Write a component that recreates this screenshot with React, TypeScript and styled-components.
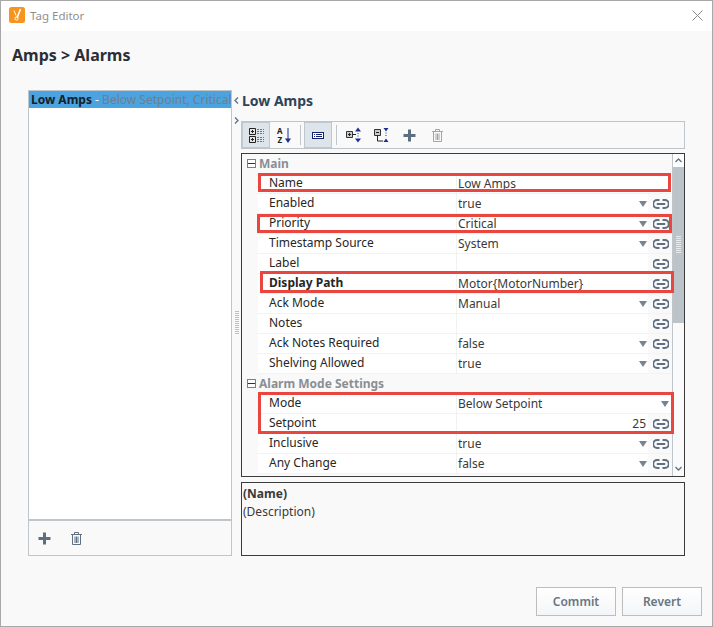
import React from "react";
import styled, { createGlobalStyle } from "styled-components";

const GlobalStyle = createGlobalStyle`
html, body {
  margin: 0;
  padding: 0;
  background: #f9f9f9;
}
`

type Row = {
    label: string,
    value?: string,
    bold?: boolean,
    dropdown?: boolean,
    link?: boolean,
    right?: boolean,
}

const mainRows: Row[] = [
    { label: "Name", value: "Low Amps" },
    { label: "Enabled", value: "true", dropdown: true, link: true },
    { label: "Priority", value: "Critical", dropdown: true, link: true },
    { label: "Timestamp Source", value: "System", dropdown: true, link: true },
    { label: "Label", link: true },
    { label: "Display Path", value: "Motor{MotorNumber}", bold: true, link: true },
    { label: "Ack Mode", value: "Manual", dropdown: true, link: true },
    { label: "Notes", link: true },
    { label: "Ack Notes Required", value: "false", dropdown: true, link: true },
    { label: "Shelving Allowed", value: "true", dropdown: true, link: true },
]

const modeRows: Row[] = [
    { label: "Mode", value: "Below Setpoint", dropdown: true },
    { label: "Setpoint", value: "25", right: true, link: true },
    { label: "Inclusive", value: "true", dropdown: true, link: true },
    { label: "Any Change", value: "false", dropdown: true, link: true },
]

const LinkIcon = () => (
    <svg width="16" height="10" viewBox="0 0 16 10">
        <path d="M6.5 1H4.2a4 4 0 0 0 0 8H6.5M9.5 1h2.3a4 4 0 0 1 0 8H9.5M3.8 5h8.4" fill="none" stroke="#5f7082" strokeWidth="2" />
    </svg>
)

const PlusIcon = () => (
    <svg width="13" height="13" viewBox="0 0 13 13">
        <path d="M6.5 0.5v12M0.5 6.5h12" stroke="#5c6f82" strokeWidth="3" />
    </svg>
)

const TrashIcon = ({ color }: { color: string }) => (
    <svg width="11" height="13" viewBox="0 0 11 13">
        <path d="M0 2.5h11M3.5 2V0.5h4V2M1.5 3v9.5h8V3M4 4.5v6.5M5.5 4.5v6.5M7 4.5v6.5" fill="none" stroke={color} strokeWidth="1" />
    </svg>
)

const CategorizedIcon = () => (
    <svg width="15" height="16" viewBox="0 0 15 16">
        <path d="M0.5 1.5h6v6h-6zM0.5 9.5h6v6h-6z" fill="#e4e4e4" stroke="#222" />
        <path d="M2 4.5h3M3.5 3v3M2 12.5h3M3.5 11v3" stroke="#222" />
        <path d="M8 2.5h7M8 4.5h7M8 6.5h7M8 10.5h7M8 12.5h7M8 14.5h7" stroke="#777" strokeDasharray="2 1" />
    </svg>
)

const SortIcon = () => (
    <svg width="14" height="17" viewBox="0 0 14 17" overflow="visible">
        <path d="M11 1v12" stroke="#1f2f8f" strokeWidth="1" />
        <path d="M8 11.5h6L11 16z" fill="#1f2f8f" />
        <text x="0" y="7" fontFamily="'Noto Sans', sans-serif" fontSize="8" fontWeight="700" fill="#222">A</text>
        <text x="0.5" y="15.5" fontFamily="'Noto Sans', sans-serif" fontSize="8" fontWeight="700" fill="#222">Z</text>
    </svg>
)

const DescIcon = () => (
    <svg width="12" height="7" viewBox="0 0 12 7">
        <rect x="0.5" y="0.5" width="11" height="6" fill="#fff" stroke="#14206e" />
        <path d="M2 2.5h1M4 2.5h6M2 4.5h1M4 4.5h6" stroke="#14206e" />
    </svg>
)

const ExpandIcon = () => (
    <svg width="16" height="16" viewBox="0 0 16 16">
        <path d="M0.5 4.5h6v6h-6z" fill="#ccc" stroke="#333" />
        <path d="M2 7.5h3M3.5 6v3M7 7.5h3" stroke="#222" />
        <path d="M12 0.5L15 4.5H9zM12 15.5L15 11.5H9z" fill="#1f2f8f" />
        <path d="M12 6v1M12 8.5v1" stroke="#1f2f8f" />
    </svg>
)

const CollapseIcon = () => (
    <svg width="16" height="16" viewBox="0 0 16 16">
        <path d="M0.5 2.5h6v6h-6z" fill="#ccc" stroke="#333" />
        <path d="M2 5.5h3M3.5 8.5v5.5H9" fill="none" stroke="#222" />
        <path d="M9.5 1h5L12 4.5zM9.5 15h5L12 11.5z" fill="#1f2f8f" />
        <path d="M12 5.5v1M12 8v1" stroke="#1f2f8f" />
    </svg>
)

const LogoIcon = () => (
    <svg width="16" height="16" viewBox="0 0 16 16">
        <rect width="16" height="16" rx="2.5" fill="#f7941d" />
        <path d="M5 3.5L7 8.5" stroke="#fff" strokeWidth="1" />
        <path d="M11.5 2L8 11" stroke="#fff" strokeWidth="1.6" />
        <circle cx="7.5" cy="11.5" r="1.6" fill="none" stroke="#fff" />
    </svg>
)

const CloseIcon = () => (
    <svg width="11" height="11" viewBox="0 0 11 11">
        <path d="M0.5 0.5l10 10M10.5 0.5l-10 10" stroke="#8a8a8a" />
    </svg>
)

const MinusBox = () => (
    <TreeBox>
        <svg width="9" height="9" viewBox="0 0 9 9">
            <path d="M1 4.5h7" stroke="#333" />
        </svg>
    </TreeBox>
)

const ChevronSmall = ({ d }: { d: string }) => (
    <svg width="7" height="7" viewBox="0 0 7 7">
        <path d={d} fill="none" stroke="#5f7082" strokeWidth="1.3" />
    </svg>
)

const PropRow = ({ row }: { row: Row }) => (
    <RowLine>
        <RowLabel $bold={row.bold}>{row.label}</RowLabel>
        <RowValue $right={row.right}>
            {row.value}
            {row.dropdown && <DropArrow $inset={row.link ? 1 : 3} />}
        </RowValue>
        {row.link && <LinkCell><LinkIcon /></LinkCell>}
    </RowLine>
)

export default function App() {
    return (
        <Window>
            <GlobalStyle />
            <TitleBar>
                <LogoIcon />
                <TitleText>Tag Editor</TitleText>
                <CloseSpot><CloseIcon /></CloseSpot>
            </TitleBar>

            <Crumb>Amps &gt; Alarms</Crumb>

            <ListPanel>
                <ListRow>
                    <strong>Low Amps</strong><Dash> - </Dash><Faded>Below Setpoint, Critical</Faded>
                </ListRow>
            </ListPanel>
            <ListFooter>
                <FooterPlus><PlusIcon /></FooterPlus>
                <FooterTrash><TrashIcon color="#5f7082" /></FooterTrash>
            </ListFooter>

            <SplitLeft><ChevronSmall d="M5 0.5L2 3.5L5 6.5" /></SplitLeft>
            <SplitRight><ChevronSmall d="M2 0.5L5 3.5L2 6.5" /></SplitRight>
            <Grip />

            <AlarmTitle>Low Amps</AlarmTitle>

            <Toolbar>
                <ToolButton $active $left={0}><CategorizedIcon /></ToolButton>
                <ToolButton $left={28}><SortIcon /></ToolButton>
                <ToolDivider $left={58} />
                <ToolButton $active $left={62}><DescIcon /></ToolButton>
                <ToolDivider $left={94} />
                <ToolButton $left={98}><ExpandIcon /></ToolButton>
                <ToolButton $left={126}><CollapseIcon /></ToolButton>
                <ToolButton $left={153}><PlusIcon /></ToolButton>
                <ToolButton $left={181}><TrashIcon color="#a0a6ac" /></ToolButton>
            </Toolbar>

            <GridBox>
                <GroupRow><MinusBox />Main</GroupRow>
                {mainRows.map(row => <PropRow key={row.label} row={row} />)}
                <GroupRow><MinusBox />Alarm Mode Settings</GroupRow>
                {modeRows.map(row => <PropRow key={row.label} row={row} />)}
                <ScrollTrack>
                    <ScrollUp><ChevronSmall d="M0.5 5L3.5 2L6.5 5" /></ScrollUp>
                    <ScrollThumb />
                    <ScrollDown><ChevronSmall d="M0.5 2L3.5 5L6.5 2" /></ScrollDown>
                </ScrollTrack>
            </GridBox>

            <Mark $left={258} $top={173} $width={413} $height={19} />
            <Mark $left={257} $top={214} $width={415} $height={19} />
            <Mark $left={260} $top={271} $width={414} $height={22} />
            <Mark $left={258} $top={392} $width={416} $height={42} />

            <DescBox>
                <DescName>(Name)</DescName>
                <div>(Description)</div>
            </DescBox>

            <FootButton $left={536}>Commit</FootButton>
            <FootButton $left={622}>Revert</FootButton>
        </Window>
    )
}

const Window = styled.div`
position: relative;
width: 713px;
height: 627px;
box-sizing: border-box;
border: 1px solid #a8a8a8;
background: #f9f9f9;
overflow: hidden;
font-family: "Noto Sans", sans-serif;
font-size: 12px;
color: #2b2b2b;
`

const TitleBar = styled.div`
position: absolute;
left: 0;
top: 0;
width: 711px;
height: 30px;
background: #fff;
display: flex;
align-items: center;
padding: 0 0 2px 8px;
box-sizing: border-box;
`

const TitleText = styled.span`
margin-left: 5px;
font-size: 11.5px;
color: #8f8f8f;
`

const CloseSpot = styled.div`
position: absolute;
left: 691px;
top: 9px;
line-height: 0;
`

const Crumb = styled.div`
position: absolute;
left: 11px;
top: 43px;
font-size: 16px;
line-height: 22px;
font-weight: 700;
color: #2a2f36;
`

const ListPanel = styled.div`
position: absolute;
left: 27px;
top: 89px;
width: 204px;
height: 430px;
box-sizing: border-box;
border: 1px solid #c0c5ca;
background: #fff;
`

const ListRow = styled.div`
height: 17px;
line-height: 17px;
padding-left: 2px;
background: #4ba3e0;
color: #14202c;
white-space: nowrap;
overflow: hidden;
strong {
  font-weight: 700;
}
`

const Dash = styled.span`
color: #fff;
`

const Faded = styled.span`
color: #6f7f8c;
`

const ListFooter = styled.div`
position: absolute;
left: 27px;
top: 519px;
width: 204px;
height: 36px;
box-sizing: border-box;
border: 1px solid #c0c5ca;
`

const FooterPlus = styled.div`
position: absolute;
left: 9px;
top: 11px;
line-height: 0;
`

const FooterTrash = styled.div`
position: absolute;
left: 42px;
top: 11px;
line-height: 0;
`

const SplitLeft = styled.div`
position: absolute;
left: 232px;
top: 96px;
line-height: 0;
`

const SplitRight = styled.div`
position: absolute;
left: 232px;
top: 116px;
line-height: 0;
`

const Grip = styled.div`
position: absolute;
left: 234px;
top: 310px;
width: 4px;
height: 24px;
background: repeating-linear-gradient(to bottom, #b9bfc5 0 1px, transparent 1px 2px);
`

const AlarmTitle = styled.div`
position: absolute;
left: 241px;
top: 90px;
font-size: 14px;
line-height: 20px;
font-weight: 700;
color: #2f4358;
`

const Toolbar = styled.div`
position: absolute;
left: 240px;
top: 120px;
width: 444px;
height: 28px;
box-sizing: border-box;
border: 1px solid #c0c5ca;
`

const ToolButton = styled.div<{ $left: number, $active?: boolean }>`
position: absolute;
left: ${p => p.$left}px;
top: 0;
width: 28px;
height: 26px;
box-sizing: border-box;
display: flex;
align-items: center;
justify-content: center;
background: ${p => p.$active ? "#dde4ea" : "transparent"};
border: 1px solid ${p => p.$active ? "#c0c8cf" : "transparent"};
`

const ToolDivider = styled.div<{ $left: number }>`
position: absolute;
left: ${p => p.$left}px;
top: 3px;
width: 1px;
height: 20px;
background: #c0c5ca;
`

const GridBox = styled.div`
position: absolute;
left: 240px;
top: 152px;
width: 444px;
height: 324px;
box-sizing: border-box;
border: 1px solid #3c3c3c;
overflow: hidden;
`

const GroupRow = styled.div`
position: relative;
height: 20px;
line-height: 20px;
padding-left: 17px;
font-weight: 700;
color: #8a8f94;
`

const TreeBox = styled.span`
position: absolute;
left: 5px;
top: 5px;
width: 9px;
height: 9px;
box-sizing: border-box;
border: 1px solid #7f7f7f;
background: #fff;
line-height: 0;
svg {
  position: absolute;
  left: -1px;
  top: -1px;
}
`

const RowLine = styled.div`
position: relative;
height: 20px;
margin-left: 16px;
width: 414px;
background: #fff;
box-shadow: inset 0 -1px 0 #f3f3f3;
display: flex;
line-height: 17px;
`

const RowLabel = styled.div<{ $bold?: boolean }>`
width: 199px;
padding-left: 11px;
box-sizing: border-box;
border-right: 1px solid #f1f1f1;
color: #262626;
font-weight: ${p => p.$bold ? 700 : 400};
`

const RowValue = styled.div<{ $right?: boolean }>`
position: relative;
flex: 1;
padding: 1px 2px 0 1px;
box-sizing: border-box;
text-align: ${p => p.$right ? "right" : "left"};
color: #3a3a3a;
`

const DropArrow = styled.span<{ $inset: number }>`
position: absolute;
right: ${p => p.$inset}px;
top: 7px;
width: 0;
height: 0;
border-left: 4px solid transparent;
border-right: 4px solid transparent;
border-top: 6px solid #76858f;
`

const LinkCell = styled.div`
width: 24px;
height: 19px;
display: flex;
align-items: center;
padding-left: 5px;
box-sizing: border-box;
background: #f9f9f9;
`

const ScrollTrack = styled.div`
position: absolute;
right: 0;
top: 0;
width: 12px;
height: 100%;
background: #fafafa;
border-left: 1px solid #c0c5ca;
box-sizing: border-box;
`

const ScrollUp = styled.div`
height: 13px;
background: #fff;
display: flex;
align-items: center;
justify-content: center;
`

const ScrollThumb = styled.div`
height: 156px;
background:
  repeating-linear-gradient(to bottom, #e9ecef 0 1px, transparent 1px 2px) center 69px / 5px 17px no-repeat,
  #bcc3c9;
`

const ScrollDown = styled.div`
position: absolute;
bottom: 2px;
left: 0;
width: 100%;
height: 12px;
display: flex;
align-items: center;
justify-content: center;
`

const Mark = styled.div<{ $left: number, $top: number, $width: number, $height: number }>`
position: absolute;
left: ${p => p.$left - 1}px;
top: ${p => p.$top - 1}px;
width: ${p => p.$width}px;
height: ${p => p.$height}px;
box-sizing: border-box;
border: 3px solid #e8463f;
pointer-events: none;
`

const DescBox = styled.div`
position: absolute;
left: 240px;
top: 481px;
width: 444px;
height: 74px;
box-sizing: border-box;
border: 1px solid #3c3c3c;
padding: 2px 1px;
line-height: 18px;
color: #3a3a3a;
`

const DescName = styled.div`
font-weight: 700;
`

const FootButton = styled.div<{ $left: number }>`
position: absolute;
left: ${p => p.$left - 1}px;
top: 586px;
width: 80px;
height: 29px;
box-sizing: border-box;
border: 1px solid #bdbdbd;
background: linear-gradient(to bottom, #ffffff, #f3f5f8);
text-align: center;
line-height: 27px;
font-weight: 600;
color: #6a7580;
`
